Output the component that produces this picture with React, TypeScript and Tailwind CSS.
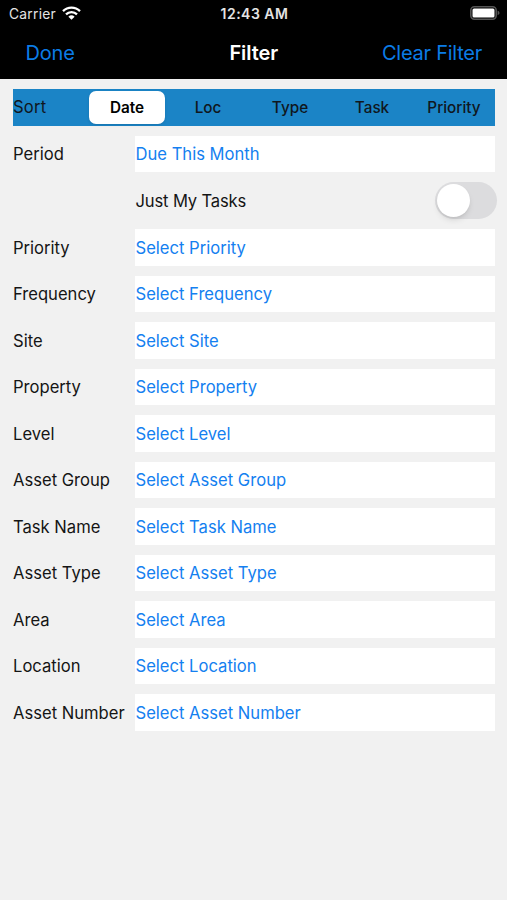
import React, { useState } from "react";

const tabs = [
  { name: "Loc", cell: "w-[82px]" },
  { name: "Type", cell: "w-[82px]" },
  { name: "Task", cell: "w-[82px]" },
  { name: "Priority", cell: "w-[82px]" },
];

const fields = [
  "Priority",
  "Frequency",
  "Site",
  "Property",
  "Level",
  "Asset Group",
  "Task Name",
  "Asset Type",
  "Area",
  "Location",
  "Asset Number",
];

function StatusBar() {
  return (
    <div className="grid h-[27px] grid-cols-3 items-center pr-[7px] pl-[9px] text-[13.8px] text-[#e4e4e4]">
      <div className="flex items-center gap-[6px]">
        <span className="pt-[2px] tracking-[0.25px]">Carrier</span>
        <svg className="mt-[-1px] h-[14px] w-[19px]" viewBox="0 0 19 14" fill="none" stroke="#fff" strokeWidth="2.3">
          <path d="M1 5.1a12.1 12.1 0 0 1 17 0" />
          <path d="M4 8.4a7.8 7.8 0 0 1 11 0" />
          <path d="M9.5 13.7 6.4 10.7a4.5 4.5 0 0 1 6.2 0Z" fill="#fff" stroke="none" />
        </svg>
      </div>
      <span className="text-center text-[14px] font-semibold tracking-[0.5px] whitespace-nowrap">12:43 AM</span>
      <svg className="-mt-[1px] h-[14px] w-[30px] justify-self-end" viewBox="0 0 30 14">
        <rect x=".8" y=".8" width="25.4" height="12.4" rx="3.6" fill="none" stroke="#555" strokeWidth="1.6" />
        <rect x="2.5" y="2.5" width="22" height="9" rx="1.5" fill="#fff" />
        <path d="M27.6 4.8v4.4c1.1-.3 1.9-1.2 1.9-2.2s-.8-1.9-1.9-2.2Z" fill="#555" />
      </svg>
    </div>
  );
}

function FieldRow({ label, value }: { label: string; value: string }) {
  return (
    <div className="flex h-[36.5px] items-center">
      <span className="w-[122px] shrink-0 pt-[2px] whitespace-nowrap text-[#151515]">{label}</span>
      <button className="flex h-full flex-1 items-center bg-white pt-[2px] pl-[0.5px] text-left text-[#1480f0]">{value}</button>
    </div>
  );
}

export default function App() {
  const [mine, setMine] = useState(false);
  return (
    <div className="flex h-[900px] w-[507px] flex-col bg-[#f1f1f1] font-['Inter','Liberation_Sans',sans-serif]">
      <header className="h-[79px] bg-black">
        <StatusBar />
        <div className="grid h-[51px] grid-cols-3 items-center pr-[25px] pl-[25.5px] text-[20px] text-[#0b7ce6]">
          <button className="justify-self-start tracking-[-0.2px]">Done</button>
          <h1 className="text-center font-semibold tracking-[-0.1px] text-white">Filter</h1>
          <button className="justify-self-end tracking-[-0.25px] whitespace-nowrap">Clear Filter</button>
        </div>
      </header>
      <main className="flex flex-col gap-[10px] pt-[10px] pr-[12px] pl-[13px] text-[16.6px]">
        <div className="flex h-[36.5px] items-center bg-[#1b84c6] text-[#10171d]">
          <span className="w-[76px] pt-[1px] tracking-[0.2px]">Sort</span>
          <div className="flex h-full items-center text-[15.3px] font-medium">
            <button className="mr-[2px] h-[33px] w-[76px] rounded-[7px] bg-white pt-[2px] font-semibold text-black shadow">Date</button>
            {tabs.map((t) => (
              <button key={t.name} className={`${t.cell} pt-[2px]`}>{t.name}</button>
            ))}
          </div>
        </div>
        <FieldRow label="Period" value="Due This Month" />
        <div className="-mr-[2px] flex h-[37px] items-center pl-[122.5px]">
          <span className="flex-1 pt-[1px] tracking-[-0.15px] text-[#151515]">Just My Tasks</span>
          <button
            role="switch"
            aria-checked={mine}
            onClick={() => setMine(!mine)}
            className="flex h-[37px] w-[62px] items-center rounded-full bg-[#dcdcde] pl-[2px]"
          >
            <span className="size-[33px] rounded-full bg-white shadow-md" />
          </button>
        </div>
        {fields.map((f) => (
          <FieldRow key={f} label={f} value={`Select ${f}`} />
        ))}
      </main>
    </div>
  );
}
